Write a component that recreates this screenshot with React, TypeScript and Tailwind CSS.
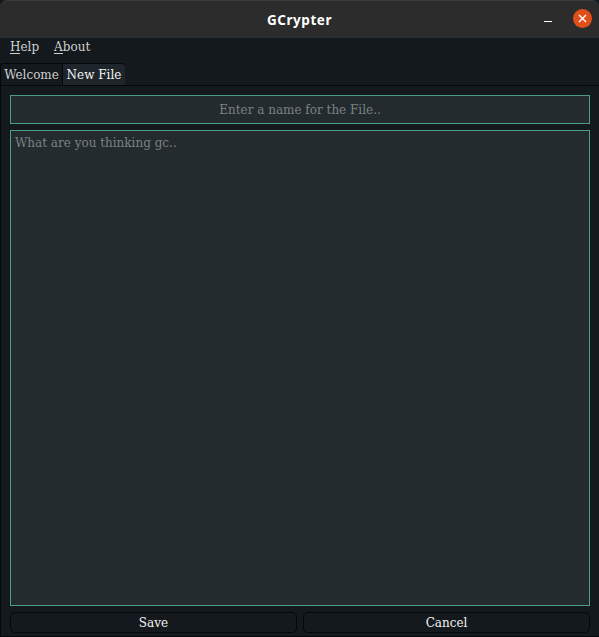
import React from "react";

function TitleBar() {
  return (
    <header className="relative flex h-[38px] shrink-0 items-center justify-center rounded-t-[7px] border-t border-[#3b3b3b] bg-[#2c2c2c]">
      <h1 className="font-['Noto_Sans','Open_Sans',sans-serif] text-[13.5px] leading-5 font-bold tracking-[0.55px] text-white">
        GCrypter
      </h1>
      <div className="absolute top-[8px] right-[7px] flex items-center gap-[21px]">
        <button aria-label="Minimize" className="mt-[5px] h-px w-2 bg-white" />
        <button
          aria-label="Close"
          className="flex size-[19px] items-center justify-center rounded-full bg-[#e04e1a]"
        >
          <svg width="9" height="9" viewBox="0 0 9 9" stroke="white" strokeWidth="1.4">
            <path d="M1 1 L8 8 M8 1 L1 8" />
          </svg>
        </button>
      </div>
    </header>
  );
}

function MenuItem({ label }: { label: string }) {
  return (
    <button className="flex leading-[14px] text-[#d0d0d0]">
      <span className="h-[14px] border-b border-[#d0d0d0]">{label[0]}</span>
      <span>{label.slice(1)}</span>
    </button>
  );
}

export default function App() {
  return (
    <div className="h-[637px] w-[599px] overflow-hidden bg-[#14191d] font-['DejaVu_Serif',serif] text-[12px]">
      <div className="flex h-full flex-col">
        <TitleBar />
        <nav className="flex h-[25px] shrink-0 items-start gap-[15px] pt-[2px] pl-[10px]">
          <MenuItem label="Help" />
          <MenuItem label="About" />
        </nav>
        <div className="flex h-[23px] shrink-0 border-b border-[#05080b]">
          <button className="w-[63px] rounded-tl-[4px] border-t border-r border-l border-[#05080b] text-center text-[#d0d0d0]">
            Welcome
          </button>
          <button className="w-[62px] rounded-tr-[4px] border-t border-[#05080b] bg-[#1e262c] text-center text-[#f3f3f3]">
            New File
          </button>
        </div>
        <main className="flex min-h-0 flex-1 flex-col gap-[6px] border-b border-l border-[#05080b] pt-[9px] pr-[9px] pb-[3px] pl-[9px]">
          <input
            placeholder="Enter a name for the File.."
            className="h-[29px] shrink-0 border border-[#4b9d86] bg-[#232b2e] text-center text-[#e0e0e0] outline-none placeholder:text-[#7b8183]"
          />
          <textarea
            placeholder="What are you thinking gc.."
            className="min-h-0 flex-1 resize-none border border-[#4b9d86] bg-[#232b2e] px-[4px] pt-[5px] leading-[14px] text-[#e0e0e0] outline-none placeholder:text-[#7b8183]"
          />
          <div className="flex h-[21px] shrink-0 gap-[6px]">
            <button className="flex-1 rounded-[5px] border border-[#05080b] pt-px leading-[18px] text-[#f3f3f3]">
              Save
            </button>
            <button className="flex-1 rounded-[5px] border border-[#05080b] pt-px leading-[18px] text-[#f3f3f3]">
              Cancel
            </button>
          </div>
        </main>
      </div>
    </div>
  );
}
